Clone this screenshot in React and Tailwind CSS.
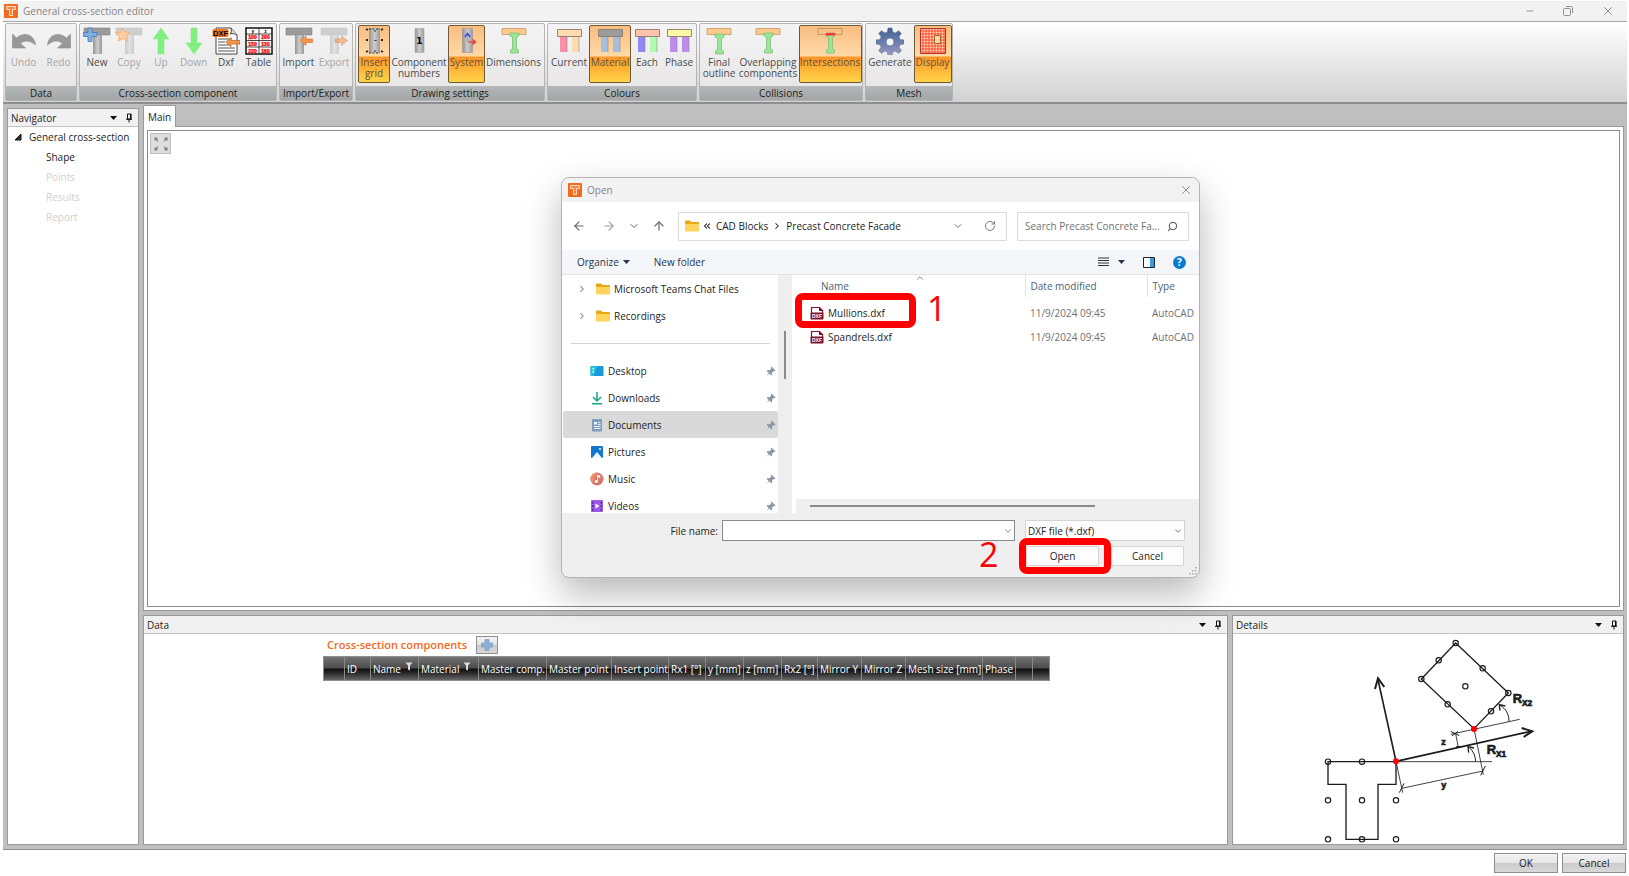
import React, { useState } from 'react';
import {
  ArrowLeft,
  ArrowRight,
  ArrowUp,
  ChevronDown,
  ChevronRight,
  ChevronUp,
  ChevronsLeft,
  Minus,
  RotateCw,
  Search,
  X
} from 'lucide-react';

const GREY = '#8f8f8f';

const Logo = ({ className }) => (
  <svg viewBox="0 0 14 14" className={className} aria-hidden="true">
    <rect width="14" height="14" rx="1" fill="#f26a1b" />
    <path d="M2.5 2.5h9v3h-3v6h-3v-6h-3z" fill="#f58a45" stroke="#ffe9da" strokeWidth="0.9" />
  </svg>
);

const RibbonSvg = ({ children }) => (
  <svg viewBox="0 0 28 28" className="h-7 w-7 shrink-0" aria-hidden="true">
    <defs>
      <linearGradient id="steel" x1="0" x2="1">
        <stop offset="0" stopColor="#949494" />
        <stop offset="0.5" stopColor="#cccccc" />
        <stop offset="1" stopColor="#9a9a9a" />
      </linearGradient>
      <linearGradient id="gear" x1="0" x2="0" y1="0" y2="1">
        <stop offset="0" stopColor="#3f5f94" />
        <stop offset="1" stopColor="#9a9cc4" />
      </linearGradient>
    </defs>
    {children}
  </svg>
);

const TeeShape = ({ faded }) => (
  <g opacity={faded ? 0.4 : 1}>
    <path d="M1 1h26v7H1z" fill="#9b9b9b" stroke="#858585" strokeWidth="0.6" />
    <path d="M10 8h9v19h-9z" fill="url(#steel)" />
  </g>
);

const SmallArrow = ({ left, faded }) => (
  <path
    d={left ? 'M15 13.500l6-4.500v3h6.500v3.500h-6.500v3z' : 'M27.500 13.500l-6-4.500v3h-6.500v3.500h6.500v3z'}
    fill="#f4954a"
    stroke="#d4773a"
    strokeWidth="0.7"
    opacity={faded ? 0.6 : 1}
  />
);

const IBeam = ({ top = 6 }) => (
  <path
    d={`M10 ${top}h9v3l-2.500 1v12l2 1v3h-8v-3l2-1v-12l-2.500-1z`}
    fill="#98e795"
    stroke="#78b878"
    strokeWidth="0.7"
  />
);

const Frame = ({ top, left, right }) => (
  <>
    <path d="M5 9h7v16h-7z" fill={left} />
    <path d="M17 9h7v16h-7z" fill={right} />
    <path d="M12 9v16M24 9v16" stroke="#777" strokeWidth="0.8" opacity="0.6" />
    <path d="M2.500 2.500h24v7h-24z" fill={top} stroke="#8a7a68" strokeWidth="0.9" />
  </>
);

const ICONS = {
  undo: (
    <path d="M2.500 7v14h13l-5-4.500c4-3.500 9-3.500 15 1.500c-1-11-12-13.500-19-7z" fill="#999" stroke="#8c8c8c" strokeWidth="0.6" />
  ),
  redo: (
    <path d="M25.500 7v14h-13l5-4.500c-4-3.500-9-3.500-15 1.500c1-11 12-13.500 19-7z" fill="#999" stroke="#8c8c8c" strokeWidth="0.6" />
  ),
  new: (
    <>
      <TeeShape />
      <path d="M5 1h4v4.500h5v4h-5v5h-4v-5h-4.500v-4h4.500z" fill="#7faee3" stroke="#4478b9" strokeWidth="0.8" />
    </>
  ),
  copy: (
    <>
      <TeeShape faded />
      <path d="M7 1l2.500 4h5l-3.500 4l1.500 5l-4.500-2.500l-5 2.500l1.500-5l-4-3.500h5z" fill="#ffd0a0" stroke="#f2b27c" />
    </>
  ),
  up: <path d="M14 1l8 11h-5v15h-6v-15h-5z" fill="#7df07d" stroke="#9be59b" strokeWidth="0.7" />,
  down: <path d="M14 27l8-11h-5v-15h-6v15h-5z" fill="#7df07d" stroke="#9be59b" strokeWidth="0.7" />,
  dxf: (
    <>
      <path d="M4 1h15l6 7v19h-21z" fill="#fff" stroke="#333" strokeWidth="0.9" />
      <path d="M19 1c1 3 0 5-1 6c3-1 5 0 7 1" fill="#ddd" stroke="#333" strokeWidth="0.9" />
      <path d="M6 12h14M6 15h7M6 18h11M6 21h17M6 24h17" stroke="#555" strokeWidth="1" />
      <rect x="0.500" y="2" width="16" height="8" rx="1.500" fill="#f4761e" />
      <text x="1" y="9" fontSize="7.500" fontWeight="900" fontFamily="Liberation Sans, sans-serif">DXF</text>
      <path d="M14 15l5-4.500v3h9v3.500h-9v3z" fill="#f4954a" stroke="#b8622b" strokeWidth="0.7" />
    </>
  ),
  table: (
    <>
      <path d="M1 1h26v26h-26z" fill="#fff" stroke="#111" strokeWidth="1.500" />
      <path d="M1 7h26M1 13.500h26M1 20h26M14 1v26" stroke="#333" strokeWidth="0.900" />
      <g fontSize="5" fontWeight="bold" fontFamily="Liberation Sans, sans-serif" textAnchor="middle">
        <text x="8" y="6">y</text>
        <text x="20.500" y="6">z</text>
        <g fill="#f01818" stroke="#f01818" strokeWidth="0.400">
          <text x="7.500" y="12">100</text>
          <text x="20.500" y="12">200</text>
          <text x="7.500" y="18.500">150</text>
          <text x="20.500" y="18.500">130</text>
          <text x="7.500" y="25.500">220</text>
          <text x="20.500" y="25.500">160</text>
        </g>
      </g>
    </>
  ),
  import: (
    <>
      <TeeShape />
      <SmallArrow left />
    </>
  ),
  export: (
    <>
      <TeeShape faded />
      <SmallArrow faded />
    </>
  ),
  grid: (
    <>
      <path d="M9 1h11v25h-11z" fill="url(#steel)" />
      <path
        d="M6 2l2 1M21 3l2-1M6 13h2M21 13h2M6 25l2-1M21 24l2 1"
        stroke="#222"
        strokeWidth="1.800"
      />
      <path d="M9 2h11M9 26h11M14.500 13.500h2M14 4h2M14 24h2" stroke="#333" strokeWidth="1.200" strokeDasharray="2 1.500" />
    </>
  ),
  numbers: (
    <>
      <path d="M10 1.500h9v24h-9z" fill="url(#steel)" stroke="#aaa" strokeWidth="0.6" />
      <text x="14.500" y="17" fontSize="9" fontWeight="900" textAnchor="middle" fontFamily="DejaVu Sans, sans-serif">1</text>
    </>
  ),
  system: (
    <>
      <path d="M9.500 1.500h10v24h-10z" fill="url(#steel)" stroke="#999" strokeWidth="0.6" />
      <path d="M12 10l2.500-3.500l2.500 3.500" fill="none" stroke="#3c3cf0" strokeWidth="1.500" />
      <path d="M14.500 9v6" stroke="#9090ee" strokeWidth="0.8" />
      <path d="M15 15h7M19.500 12.500l3 2.500l-3 2.500" fill="none" stroke="#f22" strokeWidth="1.200" />
    </>
  ),
  dimensions: (
    <>
      <path d="M2 1.500h24v6h-24z" fill="#ffc98a" stroke="#c9a075" strokeWidth="0.9" />
      <IBeam />
    </>
  ),
  current: <Frame top="#ffdcb0" left="#f98fa8" right="#ffdcb0" />,
  material: <Frame top="#9c9c9c" left="#a3bfe0" right="#a3bfe0" />,
  each: <Frame top="#ffc3ab" left="#9486f5" right="#b2fab0" />,
  phase: <Frame top="#fafaa6" left="#bd8de9" right="#bd8de9" />,
  outline: (
    <>
      <path d="M2 1.500h24v6h-24z" fill="#ffc98a" stroke="#c9a075" strokeWidth="0.9" />
      <IBeam top={7} />
    </>
  ),
  overlapping: (
    <>
      <path d="M2 1.500h24v6h-24z" fill="#ffc98a" stroke="#c9a075" strokeWidth="0.9" />
      <IBeam top={6} />
    </>
  ),
  intersections: (
    <>
      <path d="M2 1.500h24v6h-24z" fill="none" stroke="#c09060" strokeWidth="0.9" />
      <IBeam />
      <path d="M10 6h9v2.500h-9z" fill="#f33" />
    </>
  ),
  generate: (
    <>
      <path
        d="M12 1h4l.7 4l2.600 1.100l3.300-2.400l2.800 2.800l-2.400 3.300l1.100 2.600l3.900.6v4l-3.900.7l-1.100 2.600l2.400 3.300l-2.800 2.800l-3.300-2.400l-2.600 1.100l-.7 3.900h-4l-.6-3.900l-2.600-1.100l-3.300 2.400l-2.800-2.800l2.400-3.300l-1.100-2.600l-4-.7v-4l4-.6l1.100-2.600l-2.400-3.300l2.800-2.800l3.300 2.400l2.600-1.100z"
        fill="url(#gear)"
        stroke="#56688f"
        strokeWidth="0.5"
      />
      <circle cx="14" cy="15" r="4" fill="#f6f4f4" stroke="#56688f" strokeWidth="0.7" />
    </>
  ),
  display: (
    <>
      <path d="M1.500 1.500h25v25h-25z" fill="#ffe0bd" stroke="#a33" />
      <path
        d="M4 2v24M7 2v24M10 2v24M13 2v24M16 2v24M19 2v24M22 2v24M25 2v24M2 4h24M2 7h24M2 10h24M2 13h24M2 16h24M2 19h24M2 22h24M2 25h24"
        stroke="#ff4426"
        strokeWidth="1"
      />
      <path d="M15.500 8.500h6v8h-6z" fill="#ffd79e" stroke="#9a5a2a" strokeWidth="0.9" />
    </>
  )
};

const RIBBON = [
  {
    title: 'Data',
    width: 'w-[72px]',
    items: [
      { icon: 'undo', label: 'Undo', width: 'w-[35px]', disabled: true },
      { icon: 'redo', label: 'Redo', width: 'w-[35px]', disabled: true }
    ]
  },
  {
    title: 'Cross-section component',
    width: 'w-[198px]',
    items: [
      { icon: 'new', label: 'New', width: 'w-8' },
      { icon: 'copy', label: 'Copy', width: 'w-8', disabled: true },
      { icon: 'up', label: 'Up', width: 'w-8', disabled: true },
      { icon: 'down', label: 'Down', width: 'w-[33px]', disabled: true },
      { icon: 'dxf', label: 'Dxf', width: 'w-8' },
      { icon: 'table', label: 'Table', width: 'w-[33px]' }
    ]
  },
  {
    title: 'Import/Export',
    width: 'w-[74px]',
    items: [
      { icon: 'import', label: 'Import', width: 'w-9' },
      { icon: 'export', label: 'Export', width: 'w-[35px]', disabled: true }
    ]
  },
  {
    title: 'Drawing settings',
    width: 'w-[190px]',
    items: [
      { icon: 'grid', label: 'Insert grid', width: 'w-8', active: true },
      { icon: 'numbers', label: 'Component numbers', width: 'w-[58px]' },
      { icon: 'system', label: 'System', width: 'w-[37px]', active: true },
      { icon: 'dimensions', label: 'Dimensions', width: 'w-[57px]' }
    ]
  },
  {
    title: 'Colours',
    width: 'w-[150px]',
    items: [
      { icon: 'current', label: 'Current', width: 'w-10' },
      { icon: 'material', label: 'Material', width: 'w-[42px]', active: true },
      { icon: 'each', label: 'Each', width: 'w-8' },
      { icon: 'phase', label: 'Phase', width: 'w-8' }
    ]
  },
  {
    title: 'Collisions',
    width: 'w-[164px]',
    items: [
      { icon: 'outline', label: 'Final outline', width: 'w-[37px]' },
      { icon: 'overlapping', label: 'Overlapping components', width: 'w-[61px]' },
      { icon: 'intersections', label: 'Intersections', width: 'w-[63px]', active: true }
    ]
  },
  {
    title: 'Mesh',
    width: 'w-[88px]',
    items: [
      { icon: 'generate', label: 'Generate', width: 'w-[47px]' },
      { icon: 'display', label: 'Display', width: 'w-[38px]', active: true }
    ]
  }
];

const COLUMNS = [
  { label: '', width: 'w-[21px]' },
  { label: 'ID', width: 'w-[26px]' },
  { label: 'Name', width: 'w-12', filter: true },
  { label: 'Material', width: 'w-[60px]', filter: true },
  { label: 'Master comp.', width: 'w-[68px]' },
  { label: 'Master point', width: 'w-[65px]' },
  { label: 'Insert point', width: 'w-[57px]' },
  { label: 'Rx1 [°]', width: 'w-[37px]' },
  { label: 'y [mm]', width: 'w-[38px]' },
  { label: 'z [mm]', width: 'w-[38px]' },
  { label: 'Rx2 [°]', width: 'w-[36px]' },
  { label: 'Mirror Y', width: 'w-11' },
  { label: 'Mirror Z', width: 'w-11' },
  { label: 'Mesh size [mm]', width: 'w-[77px]' },
  { label: 'Phase', width: 'w-[33px]' },
  { label: '', width: 'w-[17px]' },
  { label: '', width: 'w-[17px]' }
];

const FolderIcon = () => (
  <svg viewBox="0 0 14 12" className="h-3 w-3.5 shrink-0" aria-hidden="true">
    <path d="M0 1.500a1 1 0 0 1 1-1h4l1.500 1.500h6.500a1 1 0 0 1 1 1v3h-14z" fill="#e8a915" />
    <path d="M0 4h14v6.500a1 1 0 0 1-1 1h-12a1 1 0 0 1-1-1z" fill="#ffd35c" />
  </svg>
);

const PLACE_ICONS = {
  Desktop: (
    <>
      <rect x="0.500" y="2" width="13" height="10" rx="1" fill="#1a9bd7" />
      <path d="M.5 3a1 1 0 0 1 1-1h6l-4 10h-2a1 1 0 0 1-1-1z" fill="#25c1dd" />
      <path d="M2.500 4h1.500v1.500h-1.500zM2.500 7h1.500v1.500h-1.500z" fill="#fff" />
    </>
  ),
  Downloads: (
    <path d="M7 1v8.500M3 6l4 4l4-4M2 12.800h10" fill="none" stroke="#14a58a" strokeWidth="1.500" />
  ),
  Documents: (
    <>
      <rect x="2" y="1" width="10" height="12.500" rx="1" fill="#7f9cbc" />
      <path d="M4 4h3v2.500h-3zM8 4h2.500v1h-2.500zM8 6h2.500v1h-2.500zM4 8h6.500v1h-6.500zM4 10h6.500v1h-6.500z" fill="#eef4fb" />
    </>
  ),
  Pictures: (
    <>
      <rect x="1" y="1" width="12" height="12" rx="1" fill="#1277cf" />
      <path d="M2 13l5-6l5 6z" fill="#f0f8ff" />
      <circle cx="10" cy="4" r="1" fill="#fff" />
    </>
  ),
  Music: (
    <>
      <circle cx="7" cy="7" r="6.500" fill="#d9736c" />
      <path d="M7 .5a6.500 6.500 0 0 0-6.500 6.500c0 2 1 3.500 2 4.500z" fill="#ee8e60" />
      <path d="M7.500 3v6.500M7.500 3l2.500 1v1.500l-2.500-1" fill="#fff" stroke="#fff" strokeWidth="0.8" />
      <circle cx="6.200" cy="9.500" r="1.500" fill="#fff" />
    </>
  ),
  Videos: (
    <>
      <rect x="1" y="1" width="12" height="12" rx="1" fill="#9a5ae6" />
      <path d="M2 3h1.500v1.500h-1.500zM2 6.500h1.500v1.500h-1.500zM2 10h1.500v1.500h-1.500zM10.500 3h1.500v1.500h-1.500zM10.500 6.500h1.500v1.500h-1.500zM10.500 10h1.500v1.500h-1.500z" fill="#4d1b96" />
      <path d="M5.500 4.500l4 2.500l-4 2.500z" fill="#fff" />
    </>
  )
};

const DxfFileIcon = () => (
  <svg viewBox="0 0 14 14" className="h-3.5 w-3.5 shrink-0" aria-hidden="true">
    <path d="M1.500 7v-5.500h8l3 3v2.500" fill="#fff" stroke="#7a1233" strokeWidth="1.200" />
    <path d="M9 1v4h4z" fill="#7a1233" />
    <rect x="0.500" y="6.500" width="13" height="7" rx="0.800" fill="#7a1233" />
    <text x="7" y="12" fontSize="5" fontWeight="900" textAnchor="middle" fill="#fff" fontFamily="Liberation Sans, sans-serif">DXF</text>
  </svg>
);

const PinnedIcon = () => (
  <svg viewBox="0 0 10 10" className="h-2.5 w-2.5" aria-hidden="true">
    <path d="M5.500.5l4 4l-1 .8l-.8-.2l-1.700 1.700l.2 2l-.8.7l-2-2l-2.900 2.500l2.200-3.100l-2-2l.8-.8l2 .1l1.800-1.600l-.4-1z" fill="#8b98a3" />
  </svg>
);

const PinIcon = () => (
  <svg viewBox="0 0 8 10" className="h-2.5 w-2" aria-hidden="true">
    <path d="M2.500 1h3.500v5h-3.500zM1 6.300h6M4 6.500v3" fill="none" stroke="#111" />
    <path d="M5 1h1.200v5h-1.200z" fill="#111" />
  </svg>
);

const CaretDown = ({ color = '#111' }) => (
  <svg viewBox="0 0 7 4" className="h-1 w-[7px]" aria-hidden="true">
    <path d="M0 0h7l-3.500 4z" fill={color} />
  </svg>
);

const FunnelIcon = () => (
  <svg viewBox="0 0 8 9" className="mb-1 h-[9px] w-2" aria-hidden="true">
    <path d="M.5.5h7l-2.500 3v5l-2-1v-4z" fill="#ddd" />
  </svg>
);

const PanelHeader = ({ title }) => (
  <div className="flex h-[18px] shrink-0 items-center border-b border-[#c4c4c4] bg-[#f1f1f1] pr-[5px] pl-[3px]">
    <h2 className="flex-1">{title}</h2>
    <button type="button" aria-label={`${title} options`} className="mr-2">
      <CaretDown />
    </button>
    <button type="button" aria-label={`Pin ${title}`}>
      <PinIcon />
    </button>
  </div>
);

const RibbonButton = ({ item }) => (
  <button
    type="button"
    disabled={item.disabled}
    aria-pressed={item.active}
    className={`flex h-[58px] shrink-0 flex-col items-center border pt-px leading-[11px] ${item.width} ${
      item.active
        ? 'rounded-xs border-[#6f5a35] bg-[linear-gradient(#f9bd80,#ffd9a8_54%,#ff9424_55%,#ffd54c)] text-[#5b5340]'
        : 'border-transparent text-[#4a4a4a]'
    } ${item.disabled ? 'text-[#a5a5a5]' : ''}`}
  >
    <RibbonSvg>{ICONS[item.icon]}</RibbonSvg>
    <span className="mt-0.5 text-center">
      {item.label.split(' ').map((word) => (
        <span key={word} className="block">{word}</span>
      ))}
    </span>
  </button>
);

const Ribbon = () => (
  <div className="flex h-[83px] shrink-0 gap-0.5 border-t border-b-2 border-t-[#a6a6a6] border-b-[#8e8e8e] bg-gradient-to-b from-white to-[#d2d2d2] pt-px pl-0.5">
    {RIBBON.map((group) => (
      <div
        key={group.title}
        className={`flex h-[78px] shrink-0 flex-col rounded-xs border border-[#b4b4b4] bg-gradient-to-b from-[#f4f4f4] to-[#e6e4e4] ${group.width}`}
      >
        <div className="flex flex-1 justify-center pt-px">
          {group.items.map((item) => (
            <RibbonButton key={item.label} item={item} />
          ))}
        </div>
        <div className="h-3.5 bg-gradient-to-b from-[#b4b8b8] to-[#a2a6a6] text-center leading-[14px]">
          {group.title}
        </div>
      </div>
    ))}
  </div>
);

const NAV_ITEMS = [
  { label: 'Shape' },
  { label: 'Points', disabled: true },
  { label: 'Results', disabled: true },
  { label: 'Report', disabled: true }
];

const Navigator = () => (
  <aside className="flex w-[132px] shrink-0 flex-col border border-[#999] bg-white">
    <PanelHeader title="Navigator" />
    <div className="flex h-5 items-center gap-[7px] pl-1.5">
      <svg viewBox="0 0 8 8" className="h-2 w-2" aria-hidden="true">
        <path d="M7 1v6h-6z" fill="#333" stroke="#111" />
      </svg>
      <span>General cross-section</span>
    </div>
    <ul>
      {NAV_ITEMS.map((item) => (
        <li key={item.label} className="h-5">
          <button
            type="button"
            disabled={item.disabled}
            className="flex h-full items-center pl-[38px] disabled:text-[#cfcfcf]"
          >
            {item.label}
          </button>
        </li>
      ))}
    </ul>
  </aside>
);

const DataPanel = () => (
  <section className="flex min-w-0 flex-1 flex-col border border-[#999] bg-white">
    <PanelHeader title="Data" />
    <div className="pt-0.5 pl-[179px]">
      <div className="flex items-center gap-[9px] pl-1">
        <h3 className="text-[11px] font-semibold text-[#f26a1b]">Cross-section components</h3>
        <button
          type="button"
          aria-label="Add component"
          className="flex h-[18px] w-[22px] items-center justify-center border border-[#8f8f8f] bg-[linear-gradient(#f3f3f3,#e4e4e4_50%,#c8c8c8_51%,#dadada)]"
        >
          <svg viewBox="0 0 12 12" className="h-3 w-3" aria-hidden="true">
            <path d="M4 .5h4v3.500h3.500v4h-3.500v3.500h-4v-3.500h-3.500v-4h3.500z" fill="#8ab0da" stroke="#6f97c6" strokeWidth="0.6" />
          </svg>
        </button>
      </div>
      <table className="mt-0.5 w-[727px] table-fixed border-collapse border border-[#8f8f8f] bg-[linear-gradient(#767676,#4a4a4a_48%,#0c0c0c_50%,#2c2c2c_70%,#6a6a6a)] text-white">
        <thead>
          <tr className="h-6">
            {COLUMNS.map((col, i) => (
              <th
                key={i}
                scope="col"
                className={`border-r border-[#8a8a8a] p-0 text-left font-normal whitespace-nowrap ${col.width}`}
              >
                <span className="flex items-center gap-1 pl-0.5">
                  {col.label}
                  {col.filter && <FunnelIcon />}
                </span>
              </th>
            ))}
          </tr>
        </thead>
      </table>
    </div>
  </section>
);

const NODES = [
  [354, 485], [456, 485], [354, 601], [456, 601], [558, 601], [354, 718], [456, 718], [558, 718],
  [737, 129], [686, 181], [634, 237], [713, 313], [843, 334], [895, 279], [818, 205], [766, 259]
];

const DetailsPanel = () => (
  <section className="flex w-[392px] shrink-0 flex-col border border-[#999] bg-white">
    <PanelHeader title="Details" />
    <div className="flex flex-1 justify-center overflow-hidden pl-1">
      <svg
        viewBox="330 102 660 630"
        className="h-[210px] w-[220px]"
        fill="none"
        stroke="#1c1c1c"
        strokeWidth="4"
        role="img"
        aria-label="Insertion angles and offsets"
      >
        <path d="M354 485h204v68h-54v165h-96v-165h-54z" />
        <path d="M737 129l158 150l-103 107l-158-149z" />
        <path d="M558 484l-54-245M558 484l405-90" strokeWidth="5" />
        <path d="M495 267l9-32l19 26M935 384l32 10l-26 17" strokeWidth="6" />
        <path d="M558 485h288M722 403l207-45M792 386l28 138M558 484l20 94M575 565l244-52M737 401l8 42" strokeWidth="2.5" />
        <path d="M722 394l26 13M726 408l18-14M738 440h20M568 578l14-28M812 526l14-28" strokeWidth="3" />
        <path d="M797 484c-1-18-8-32-20-42M897 364c0-20-8-36-26-48" strokeWidth="3" />
        <path d="M776 458l-2-18l18 4M870 332l-2-18l18 4" strokeWidth="4" />
        {NODES.map(([x, y]) => (
          <circle key={`${x}-${y}`} cx={x} cy={y} r="8" strokeWidth="3.5" />
        ))}
        <g fill="#fb0000" stroke="none">
          <circle cx="558" cy="484" r="9" />
          <circle cx="792" cy="387" r="9" />
        </g>
        <g fill="#1c1c1c" stroke="#1c1c1c" strokeWidth="2" fontWeight="900" fontFamily="Liberation Sans, sans-serif">
          <text x="908" y="309" fontSize="39">R<tspan dy="8" fontSize="25">X2</tspan></text>
          <text x="830" y="463" fontSize="39">R<tspan dy="8" fontSize="25">X1</tspan></text>
          <text x="694" y="434" fontSize="27">z</text>
          <text x="694" y="563" fontSize="27">y</text>
        </g>
      </svg>
    </div>
  </section>
);

const PINNED = ['Desktop', 'Downloads', 'Documents', 'Pictures', 'Music', 'Videos'];
const FILES = ['Mullions.dxf', 'Spandrels.dxf'];

const OpenDialog = () => {
  const [fileName, setFileName] = useState('');

  return (
    <div
      role="dialog"
      aria-label="Open"
      className="absolute top-[177px] left-[561px] w-[639px] rounded-lg border border-[#b4b4b4] bg-[#efefef] shadow-[0_16px_36px_rgba(0,0,0,0.28)]"
    >
      <div className="flex h-6 items-center rounded-t-lg bg-[#f2f2f2] pr-1.5 pl-1.5 text-[#858585]">
        <Logo className="mr-[5px] h-3.5 w-3.5" />
        <span className="flex-1">Open</span>
        <button type="button" aria-label="Close dialog">
          <X className="h-3.5 w-3.5" strokeWidth={1.5} />
        </button>
      </div>

      {/* Address bar */}
      <div className="flex h-12 items-center bg-white pr-2.5 pl-2.5 text-[#666]">
        <button type="button" aria-label="Back" className="w-[30px]"><ArrowLeft className="h-3.5 w-3.5" strokeWidth={2} /></button>
        <button type="button" aria-label="Forward" className="w-[26px] text-[#a0a0a0]"><ArrowRight className="h-3.5 w-3.5" strokeWidth={2} /></button>
        <button type="button" aria-label="Recent" className="w-6"><ChevronDown className="h-3 w-3" strokeWidth={2} /></button>
        <button type="button" aria-label="Up one level" className="w-[26px]"><ArrowUp className="h-3.5 w-3.5" strokeWidth={2} /></button>
        <div className="flex h-[29px] flex-1 items-center border border-[#dcdcdc] pr-2.5 pl-1.5 text-[#1c1c1c]">
          <FolderIcon />
          <ChevronsLeft className="mr-1 ml-[3px] h-2.5 w-2.5" strokeWidth={2.5} />
          <button type="button">CAD Blocks</button>
          <ChevronRight className="mx-1 h-2.5 w-2.5" strokeWidth={2.5} />
          <button type="button" className="flex-1 text-left">Precast Concrete Facade</button>
          <ChevronDown className="mr-5 h-3 w-3 text-[#777]" strokeWidth={2} />
          <button type="button" aria-label="Refresh"><RotateCw className="h-3 w-3 text-[#777]" strokeWidth={2} /></button>
        </div>
        <label className="ml-2.5 flex h-[29px] w-[172px] items-center border border-[#dcdcdc] pr-2.5 pl-[7px]">
          <span className="sr-only">Search</span>
          <input
            type="text"
            placeholder="Search Precast Concrete Fa..."
            className="min-w-0 flex-1 outline-none placeholder:text-[#707070]"
          />
          <Search className="h-[11px] w-[11px] -scale-x-100" strokeWidth={2.5} />
        </label>
      </div>

      {/* Toolbar */}
      <div className="flex h-[25px] items-center border-b border-[#e0e3e8] bg-[#f4f6f9] pr-[13px] pl-[15px] text-[#24344f]">
        <button type="button" className="mr-6 flex items-center gap-1">
          Organize <CaretDown color="#24344f" />
        </button>
        <button type="button" className="flex-1 text-left">New folder</button>
        <button type="button" aria-label="View" className="mr-[18px] flex items-center gap-[9px]">
          <svg viewBox="0 0 11 10" className="h-2.5 w-[11px]" aria-hidden="true">
            <path d="M0 1h11M0 3.500h11M0 6h11M0 8.500h11" stroke="#333" />
          </svg>
          <CaretDown color="#24344f" />
        </button>
        <button type="button" aria-label="Preview pane" className="mr-[18px]">
          <svg viewBox="0 0 12 11" className="h-[11px] w-3" aria-hidden="true">
            <path d="M.5.5h11v10h-11z" fill="#fff" stroke="#222" />
            <path d="M7 1h4v9h-4z" fill="#2f9df0" />
          </svg>
        </button>
        <button
          type="button"
          aria-label="Help"
          className="h-[13px] w-[13px] rounded-full bg-[#0a7ad1] leading-[13px] font-bold text-white"
        >
          ?
        </button>
      </div>

      <div className="flex h-[238px]">
        {/* Places */}
        <nav className="w-[216px] overflow-hidden bg-white pl-px">
          {['Microsoft Teams Chat Files', 'Recordings'].map((folder) => (
            <button key={folder} type="button" className="flex h-[27px] w-full items-center pl-3.5">
              <ChevronRight className="mr-[9px] h-2.5 w-2.5 text-[#777]" strokeWidth={2.5} />
              <FolderIcon />
              <span className="ml-1">{folder}</span>
            </button>
          ))}
          <div className="flex h-7 items-center px-2">
            <hr className="w-full border-[#d4d4d4]" />
          </div>
          {PINNED.map((place) => (
            <button
              key={place}
              type="button"
              className={`flex h-[27px] w-[215px] items-center pr-0.5 pl-[27px] ${place === 'Documents' ? 'rounded-xs bg-[#d9d9d9]' : ''}`}
            >
              <svg viewBox="0 0 14 14" className="h-3.5 w-3.5" aria-hidden="true">{PLACE_ICONS[place]}</svg>
              <span className="ml-1 flex-1 text-left">{place}</span>
              <PinnedIcon />
            </button>
          ))}
        </nav>
        <div className="flex w-3.5 justify-center pt-14">
          <div className="h-12 w-0.5 bg-[#8a8a8a]" />
        </div>

        {/* Files */}
        <div className="flex min-w-0 flex-1 flex-col border-l-4 border-white">
          <div className="relative flex-1 overflow-hidden bg-white">
            <ChevronUp className="absolute -top-0.5 left-[119px] h-2.5 w-2.5 text-[#777]" strokeWidth={2} />
            <table className="w-full table-fixed border-collapse text-left">
              <thead className="text-[#4c607a]">
                <tr className="h-[22px]">
                  <th scope="col" className="w-[229px] border-r border-[#e3e3e3] p-0 pl-[25px] font-normal">Name</th>
                  <th scope="col" className="w-[122px] border-r border-[#e3e3e3] p-0 pl-[5px] font-normal">Date modified</th>
                  <th scope="col" className="p-0 pl-[5px] font-normal">Type</th>
                </tr>
              </thead>
              <tbody className="text-[#707070]">
                <tr className="h-1" />
                {FILES.map((file) => (
                  <tr key={file} className="h-6">
                    <td className="p-0 pl-3.5 text-[#1c1c1c]">
                      <button type="button" className="flex items-center gap-1">
                        <DxfFileIcon />
                        {file}
                      </button>
                    </td>
                    <td className="p-0 pl-[5px]">11/9/2024 09:45</td>
                    <td className="overflow-hidden p-0 pl-[5px] whitespace-nowrap">AutoCAD</td>
                  </tr>
                ))}
              </tbody>
            </table>
          </div>
          <div className="flex h-3.5 items-center pl-3.5">
            <div className="h-0.5 w-[285px] bg-[#8a8a8a]" />
          </div>
        </div>
      </div>

      {/* File name and actions */}
      <div className="flex h-[33px] items-center justify-end pt-0.5 pr-3.5">
        <label htmlFor="file-name" className="mr-1">File name:</label>
        <div className="relative mr-2.5 w-[293px]">
          <input
            id="file-name"
            value={fileName}
            onChange={(e) => setFileName(e.target.value)}
            className="block h-[21px] w-full border border-[#8a8a8a] bg-white pr-5 pl-1 outline-none"
          />
          <ChevronDown className="absolute top-1.5 right-0.5 h-2.5 w-2.5 text-[#666]" strokeWidth={2} />
        </div>
        <div className="relative w-40">
          <select
            aria-label="File type"
            className="block h-[21px] w-full appearance-none border border-[#d4d4d4] bg-[#fdfdfd] pl-0.5"
          >
            <option>DXF file (*.dxf)</option>
          </select>
          <ChevronDown className="absolute top-1.5 right-0.5 h-2.5 w-2.5 text-[#666]" strokeWidth={2} />
        </div>
      </div>
      <div className="flex h-[31px] justify-end gap-3 pr-[15px]">
        <button type="button" className="h-5 w-[73px] rounded-xs border border-[#d4d4d4] bg-[#fdfdfd]">Open</button>
        <button type="button" className="h-5 w-[73px] rounded-xs border border-[#d4d4d4] bg-[#fdfdfd]">Cancel</button>
      </div>
      <svg viewBox="0 0 8 8" className="absolute right-0.5 bottom-0.5 h-2 w-2" aria-hidden="true">
        <path d="M6 0h1.500v1.500h-1.500zM3 3h1.500v1.500h-1.500zM6 3h1.500v1.500h-1.500zM0 6h1.500v1.500h-1.500zM3 6h1.500v1.500h-1.500zM6 6h1.500v1.500h-1.500z" fill="#aaa" />
      </svg>

      {/* Step markers */}
      <div className="pointer-events-none absolute top-[115px] left-[233px] h-[35px] w-[121px] rounded-lg border-[7px] border-[#fe0000]" />
      <span className="absolute top-[113px] left-[365px] text-[34px] leading-[34px] text-[#fe0000]">1</span>
      <div className="pointer-events-none absolute top-[360px] left-[457px] h-9 w-[92px] rounded-lg border-[7px] border-[#fe0000]" />
      <span className="absolute top-[359px] left-[417px] text-[34px] leading-[34px] text-[#fe0000]">2</span>
    </div>
  );
};

const FOOTER_BUTTON =
  'h-5 w-16 border border-[#8f8f8f] bg-[linear-gradient(#f3f3f3,#e6e6e6_49%,#cbcbcb_50%,#d8d8d8)]';

export default function App() {
  return (
    <div className="relative flex min-h-screen flex-col bg-white pt-px pr-0.5 pl-[3px] font-['Open_Sans','Noto_Sans',sans-serif] text-[10px] leading-[14px] text-[#1c1c1c]">
      <header className="flex h-5 shrink-0 items-center bg-[#f2f2f2] pr-3 pl-px text-[#858585]">
        <Logo className="mr-[5px] h-3.5 w-3.5" />
        <h1 className="flex-1">General cross-section editor</h1>
        <button type="button" aria-label="Minimize" className="mr-7"><Minus className="h-2.5 w-2.5" strokeWidth={2} /></button>
        <button type="button" aria-label="Restore" className="mr-7">
          <svg viewBox="0 0 10 10" className="h-2.5 w-2.5" fill="none" stroke={GREY} aria-hidden="true">
            <rect x="0.500" y="2.500" width="7" height="7" rx="1" />
            <path d="M3 .5h5.500a1 1 0 0 1 1 1v5.500" />
          </svg>
        </button>
        <button type="button" aria-label="Close"><X className="h-3.5 w-3.5" strokeWidth={1.5} /></button>
      </header>

      <Ribbon />

      <div className="flex flex-1 gap-1 border-b border-[#8e8e8e] bg-[#bfbfbf] pt-1 pr-[3px] pb-1 pl-1">
        <Navigator />
        <main className="flex min-w-0 flex-1 flex-col">
          <div role="tablist" className="-mt-[3px] flex">
            <button
              type="button"
              role="tab"
              aria-selected="true"
              className="z-10 -mb-px h-[22px] rounded-t-xs border border-b-0 border-[#999] bg-white px-1"
            >
              Main
            </button>
          </div>
          <div className="flex flex-1 border border-[#999] bg-white p-[3px]">
            <div className="flex-1 border border-[#8a8a8a] p-0.5">
              <button
                type="button"
                aria-label="Zoom to fit"
                className="flex h-[21px] w-[21px] items-center justify-center border border-[#bdbdbd] bg-[#dedede]"
              >
                <svg viewBox="0 0 14 14" className="h-3.5 w-3.5" fill="none" stroke="#777" strokeWidth="1.2" aria-hidden="true">
                  <path d="M1 3.500v-2.500h2.500M1 1l3 3M10.500 1h2.500v2.500M13 1l-3 3M1 10.500v2.500h2.500M1 13l3-3M13 10.500v2.500h-2.500M13 13l-3-3" />
                </svg>
              </button>
            </div>
          </div>
          <div className="mt-1 flex h-[230px] gap-1">
            <DataPanel />
            <DetailsPanel />
          </div>
        </main>
      </div>

      <footer className="flex h-[26px] shrink-0 items-center justify-end gap-1 pr-px">
        <button type="button" className={FOOTER_BUTTON}>OK</button>
        <button type="button" className={FOOTER_BUTTON}>Cancel</button>
      </footer>

      <OpenDialog />
    </div>
  );
}
